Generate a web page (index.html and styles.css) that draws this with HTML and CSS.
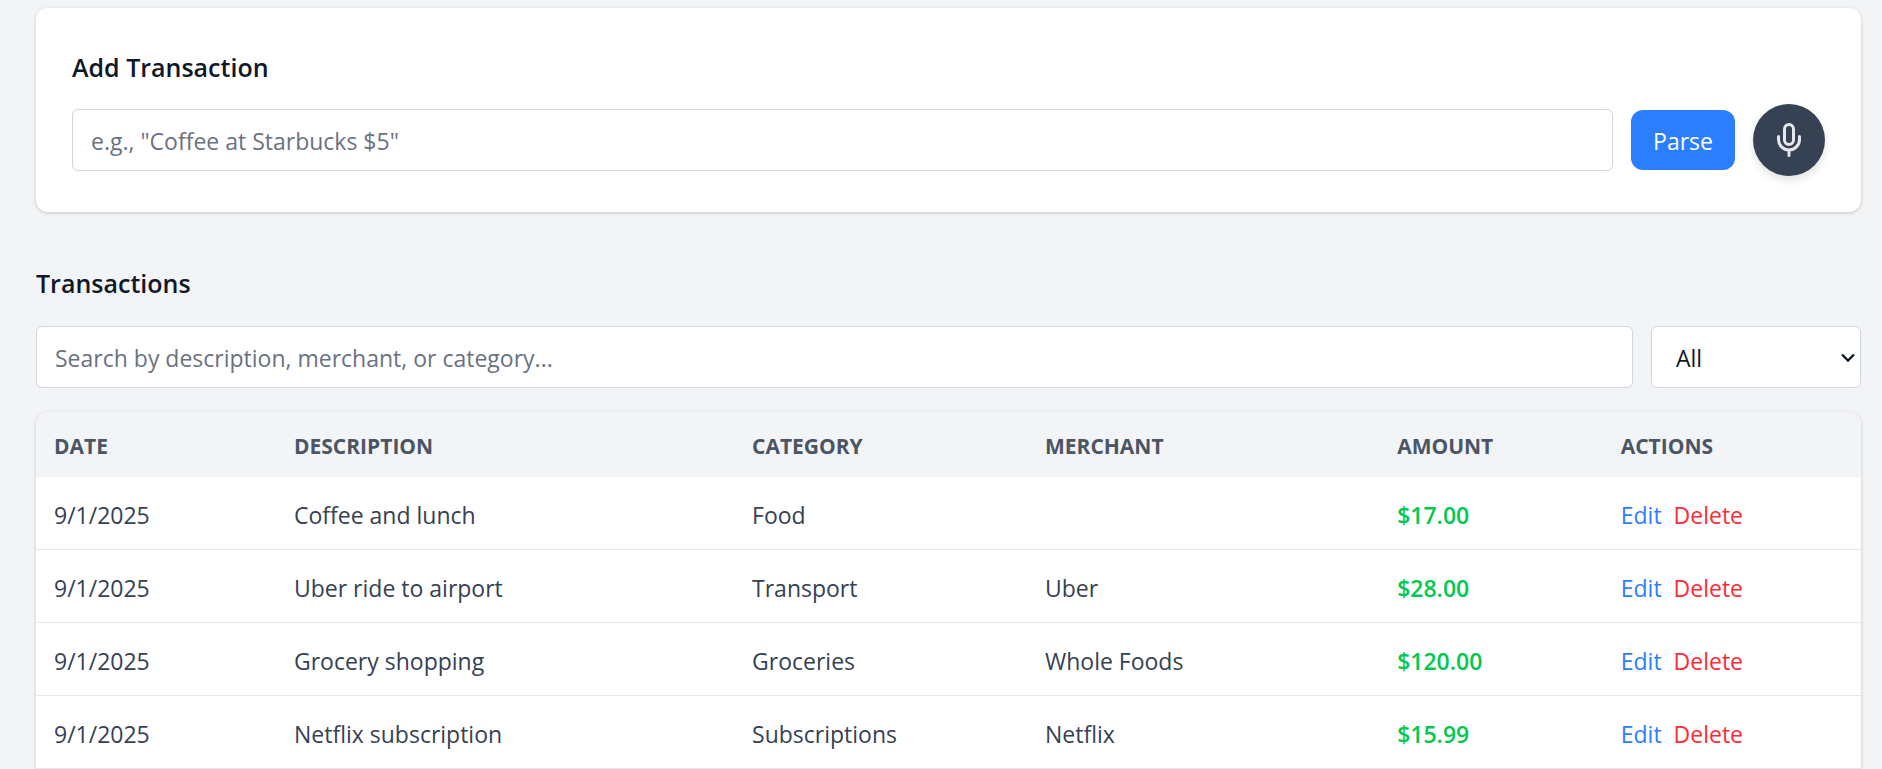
FILE: index.html
```html
<!DOCTYPE html>
<html lang="en">
<head>
<meta charset="utf-8">
<meta name="viewport" content="width=device-width, initial-scale=1">
<title>Transactions</title>
<link rel="stylesheet" href="styles.css">
</head>
<body>
<main class="page">
  <section class="card">
    <h2 class="heading">Add Transaction</h2>
    <form class="entry">
      <input class="field" type="text" aria-label="Transaction" placeholder="e.g., &quot;Coffee at Starbucks $5&quot;">
      <button class="parse" type="submit">Parse</button>
      <button class="mic" type="button" aria-label="Record">
        <svg class="mic-icon" viewBox="0 0 36 36" fill="none" stroke="currentColor" stroke-width="3" stroke-linecap="round" stroke-linejoin="round" aria-hidden="true">
          <rect x="13.5" y="2.5" width="9" height="20" rx="4.5"/>
          <path d="M7.5 14.5v3a10.5 10.5 0 0 0 21 0v-3M18 28v5.500"/>
        </svg>
      </button>
    </form>
  </section>

  <section class="list">
    <h2 class="heading">Transactions</h2>
    <div class="filters">
      <input class="field" type="text" aria-label="Search" placeholder="Search by description, merchant, or category...">
      <div class="select-wrap">
        <select class="select" aria-label="Category filter"><option>All</option></select>
        <svg class="chevron" viewBox="0 0 14 10" fill="none" stroke="currentColor" stroke-width="2.400" aria-hidden="true"><path d="M1 1.500l6 6 6-6"/></svg>
      </div>
    </div>
    <table class="table">
      <colgroup>
        <col class="col-date"><col class="col-description"><col class="col-category"><col class="col-merchant"><col class="col-amount"><col class="col-actions">
      </colgroup>
      <thead>
        <tr><th>Date</th><th>Description</th><th>Category</th><th>Merchant</th><th>Amount</th><th>Actions</th></tr>
      </thead>
      <tbody>
        <tr><td>9/1/2025</td><td>Coffee and lunch</td><td>Food</td><td></td><td class="amount">$17.00</td><td><div class="actions"><button class="edit" type="button">Edit</button><button class="delete" type="button">Delete</button></div></td></tr>
        <tr><td>9/1/2025</td><td>Uber ride to airport</td><td>Transport</td><td>Uber</td><td class="amount">$28.00</td><td><div class="actions"><button class="edit" type="button">Edit</button><button class="delete" type="button">Delete</button></div></td></tr>
        <tr><td>9/1/2025</td><td>Grocery shopping</td><td>Groceries</td><td>Whole Foods</td><td class="amount">$120.00</td><td><div class="actions"><button class="edit" type="button">Edit</button><button class="delete" type="button">Delete</button></div></td></tr>
        <tr><td>9/1/2025</td><td>Netflix subscription</td><td>Subscriptions</td><td>Netflix</td><td class="amount">$15.99</td><td><div class="actions"><button class="edit" type="button">Edit</button><button class="delete" type="button">Delete</button></div></td></tr>
      </tbody>
    </table>
  </section>
</main>
</body>
</html>
```
FILE: styles.css
```css
* {
  box-sizing: border-box;
}

body {
  margin: 0;
  background: #f3f4f6;
  color: #101828;
  font-family: "Segoe UI", "Open Sans", "Noto Sans", sans-serif;
  font-size: 23px;
  line-height: 36px;
}

button,
input,
select {
  margin: 0;
  font: inherit;
}

button {
  border: 0;
  cursor: pointer;
}

.page {
  display: flex;
  flex-direction: column;
  gap: 48px;
  padding: 8px 21px 0 36px;
}

.card {
  padding: 36px;
  border-radius: 12px;
  background: #fff;
  box-shadow: 0 1px 4px rgba(0, 0, 0, 0.1), 0 1px 3px rgba(0, 0, 0, 0.1);
}

.heading {
  margin: 0 0 16px;
  padding-top: 2px;
  font-size: 25px;
  font-weight: 600;
  line-height: 42px;
}

.entry,
.filters {
  display: flex;
  align-items: center;
  gap: 18px;
}

.field {
  flex: 1;
  min-width: 0;
  height: 62px;
  padding: 2px 18px 0;
  border: 1px solid #d1d5dc;
  border-radius: 6px;
  background: #fff;
  color: inherit;
}

.field::placeholder {
  color: #6a7282;
  opacity: 1;
}

.parse {
  padding: 13px 22px 11px;
  border-radius: 12px;
  background: #2b7fff;
  color: #fff;
}

.mic {
  display: grid;
  place-items: center;
  width: 72px;
  height: 72px;
  padding: 0;
  border-radius: 50%;
  background: #364153;
  color: #e5e7eb;
  box-shadow: 0 4px 8px rgba(0, 0, 0, 0.12);
}

.mic-icon {
  width: 36px;
  height: 36px;
}

.list .heading {
  margin-bottom: 22px;
}

.filters {
  margin-bottom: 24px;
}

.select-wrap {
  position: relative;
  width: 210px;
}

.select {
  display: block;
  width: 100%;
  height: 62px;
  padding: 2px 24px 0;
  border: 1px solid #d1d5dc;
  border-radius: 6px;
  background: #fff;
  color: inherit;
  appearance: none;
}

.chevron {
  position: absolute;
  top: 27px;
  right: 6px;
  width: 14px;
  height: 10px;
  pointer-events: none;
}

.table {
  width: 100%;
  table-layout: fixed;
  border-spacing: 0;
  border-radius: 12px 12px 0 0;
  background: #fff;
  box-shadow: 0 1px 4px rgba(0, 0, 0, 0.1), 0 1px 3px rgba(0, 0, 0, 0.1);
  overflow: hidden;
}

.col-date { width: 13.15%; }
.col-description { width: 25.1%; }
.col-category { width: 16.05%; }
.col-merchant { width: 19.3%; }
.col-amount { width: 12.25%; }
.col-actions { width: 14.15%; }

th,
td {
  padding: 20px 18px 16px;
  text-align: left;
}

th {
  background: #f3f4f6;
  color: #4a5565;
  font-size: 21px;
  font-weight: 700;
  line-height: 29px;
  text-transform: uppercase;
}

td {
  border-bottom: 1px solid #e5e7eb;
  color: #364153;
}

.amount {
  color: #00c950;
  font-weight: 600;
}

.actions {
  display: flex;
  gap: 12px;
}

.edit,
.delete {
  padding: 0;
  background: none;
}

.edit {
  color: #2b7fff;
}

.delete {
  color: #fb2c36;
}
```
